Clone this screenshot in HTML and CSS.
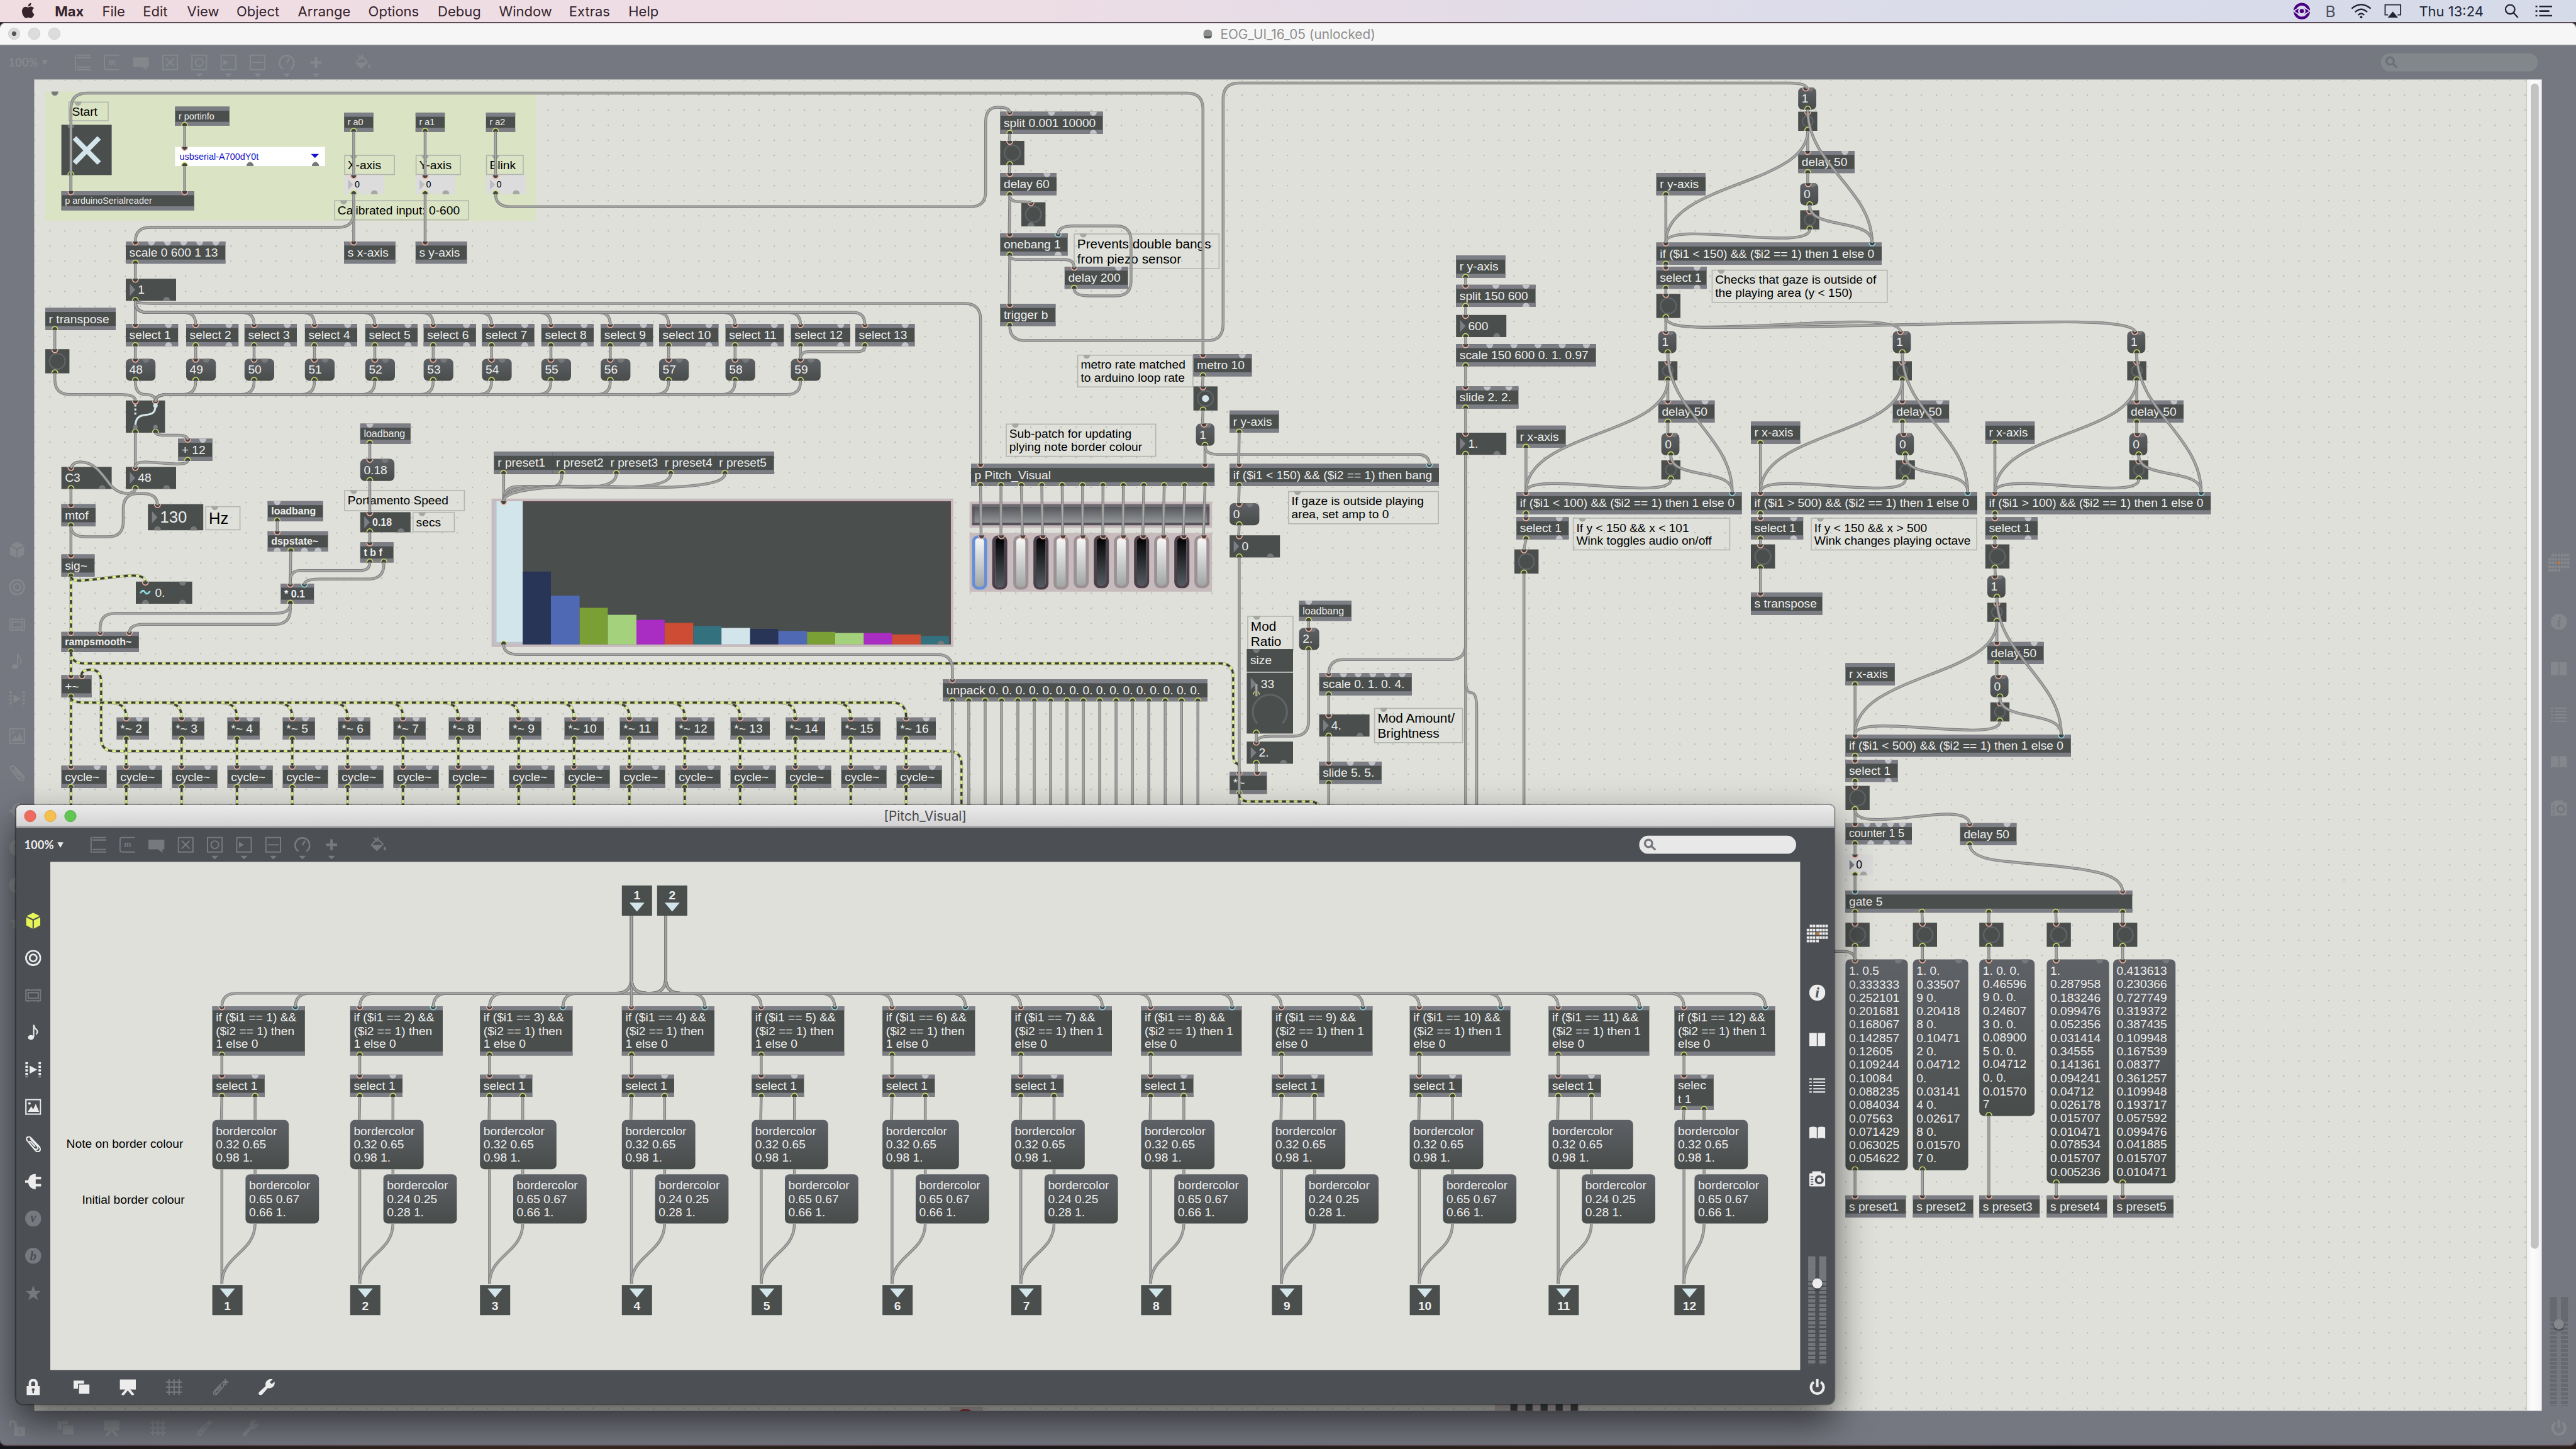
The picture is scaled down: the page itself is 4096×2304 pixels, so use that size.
FILE: index.html
```html
<!DOCTYPE html>
<html lang="en">
<head>
<meta charset="utf-8">
<title>EOG_UI_16_05</title>
<link rel="stylesheet" href="styles.css">
</head>
<body>
<svg class="defs" width="0" height="0">
  <defs>
    <symbol id="i-object" viewBox="0 0 32 32"><path class="ln" d="M2 0V32M5 1.5H32M5 6.5H32M5 25.5H32M5 30.5H32"/></symbol>
    <symbol id="i-message" viewBox="0 0 32 32"><path class="ln" d="M31 1.5H6Q1.500 1.500 1.500 6V26Q1.500 30.500 6 30.500H31"/><text class="glyph" x="17" y="21" font-size="18">m</text></symbol>
    <symbol id="i-comment" viewBox="0 0 32 32"><path d="M0 6H32V25H28V32L19 25H0Z"/></symbol>
    <symbol id="i-toggle" viewBox="0 0 32 32"><path class="ln" d="M1.500 1.500H30.500V30.500H1.500ZM8 8L24 24M24 8L8 24"/></symbol>
    <symbol id="i-button" viewBox="0 0 32 32"><path class="ln" d="M1.500 1.500H30.500V30.500H1.500Z"/><circle class="ln" cx="16" cy="16" r="7.500"/></symbol>
    <symbol id="i-number" viewBox="0 0 32 32"><path class="ln" d="M1.500 1.500H30.500V30.500H1.500Z"/><path d="M6 10L16 16L6 22Z"/></symbol>
    <symbol id="i-slider" viewBox="0 0 32 32"><path class="ln" d="M1.500 1.500H30.500V30.500H1.500ZM5 16H27"/></symbol>
    <symbol id="i-dial" viewBox="0 0 32 32"><path class="ln thick" d="M8 29A14.500 14.500 0 1 1 24 29M16 17L21 8"/></symbol>
    <symbol id="i-plus" viewBox="0 0 32 32"><path class="ln fat" d="M16 5V27M5 16H27"/></symbol>
    <symbol id="i-paint" viewBox="0 0 32 32"><path d="M1 17L13 29L26 16Z"/><path class="ln" d="M2 17L14 4L26 16M7 2L15 10M16 1L11 8"/><path d="M29 19Q34 27 29 27T29 19"/></symbol>
    <symbol id="i-cube" viewBox="0 0 32 32"><path d="M16 0L29 6.500L16 13L3 6.500ZM2 9L14.700 15.300V32L2 25ZM30 9L17.300 15.300V32L30 25Z"/></symbol>
    <symbol id="i-target" viewBox="0 0 32 32"><circle class="ln thick" cx="16" cy="16" r="14.300"/><circle class="ln thick" cx="16" cy="16" r="7"/></symbol>
    <symbol id="i-rack" viewBox="0 0 32 32"><path class="ln" d="M1.500 6H30.500V27H1.500ZM6 11H26V22H6ZM6 3V6M26 3V6M6 27V30M26 27V30"/></symbol>
    <symbol id="i-note" viewBox="0 0 32 32"><path class="ln" d="M17 25V1Q18 7 23 11Q26 15 22 20"/><ellipse cx="11.500" cy="26" rx="6" ry="4.800"/></symbol>
    <symbol id="i-video" viewBox="0 0 32 32"><path class="ln dots" d="M3 1V31M29 1V31"/><path d="M9 8L24 16L9 24Z"/></symbol>
    <symbol id="i-image" viewBox="0 0 32 32"><path class="ln" d="M1.500 1.500H30.500V30.500H1.500Z"/><path d="M5 26L12 15L16 21L21 10L28 26Z"/><circle cx="8.500" cy="9" r="2.500"/></symbol>
    <symbol id="i-clip" viewBox="0 0 32 32"><path class="ln" d="M10 5L24 20Q27 24 24 26T17 24L4 9Q1 4 5 2T12 4L28 21Q32 27 28 30T20 28L8 14Q7 10 11 11L20 21"/></symbol>
    <symbol id="i-plug" viewBox="0 0 32 32"><path d="M0 14H6Q8 1 21 1V7H32V12H21V21H32V26H21V32Q8 31 6 19H0Z"/></symbol>
    <symbol id="i-v" viewBox="0 0 32 32"><circle cx="16" cy="16" r="16"/><text class="glyph cut" x="16" y="23" font-size="25">v</text></symbol>
    <symbol id="i-b" viewBox="0 0 32 32"><circle cx="16" cy="16" r="16"/><text class="glyph cut" x="16" y="25" font-size="26">b</text></symbol>
    <symbol id="i-star" viewBox="0 0 32 32"><path d="M16 1L20 12H31L22 19L25.500 30L16 23.500L6.500 30L10 19L1 12H12Z"/></symbol>
    <symbol id="i-lock" viewBox="0 0 32 32"><path class="ln fat" d="M9.500 16V9Q9.500 2 16 2T22.500 9V16"/><path d="M3 14H29V32H3Z"/><path class="cut" d="M16 18A3 3 0 0 1 17.500 23.500V28H14.500V23.500A3 3 0 0 1 16 18"/></symbol>
    <symbol id="i-unlock" viewBox="0 0 32 32"><path class="ln fat" d="M1 13V9Q1 3 7 3T13 9V16"/><path d="M10 14H32V32H10Z"/><path class="cut" d="M20 18H22V27H20Z"/></symbol>
    <symbol id="i-windows" viewBox="0 0 32 32"><path d="M0 3H21V9H9V19H0Z"/><path d="M11 11H32V29H11Z"/></symbol>
    <symbol id="i-easel" viewBox="0 0 32 32"><path d="M0 1H32V21H0Z"/><path class="ln fat" d="M15 20L5 32M17 20L27 32"/></symbol>
    <symbol id="i-grid" viewBox="0 0 32 32"><path class="ln" d="M6 0V32M16 0V32M26 0V32M0 6H32M0 16H32M0 26H32"/></symbol>
    <symbol id="i-clipadd" viewBox="0 0 32 32"><g transform="translate(25 8) scale(-.76 .76)"><path class="ln" d="M10 5L24 20Q27 24 24 26T17 24L4 9Q1 4 5 2T12 4L28 21Q32 27 28 30T20 28L8 14Q7 10 11 11L20 21"/></g><path class="ln thick" d="M26 0V12M20 6H32"/></symbol>
    <symbol id="i-wrench" viewBox="0 0 32 32"><path d="M1 26L14 14Q12 5 20 1Q24-1 28 1L22 6L26 10L32 5Q33 14 26 17Q22 19 18 18L7 31Q4 33 1 31T1 26Z"/></symbol>
    <symbol id="i-info" viewBox="0 0 32 32"><circle cx="16" cy="16" r="16"/><text class="glyph cut" x="16" y="26" font-size="30">i</text></symbol>
    <symbol id="i-ref" viewBox="0 0 32 32"><path d="M0 3H15V29H0ZM17 3H32V29H17Z"/></symbol>
    <symbol id="i-list" viewBox="0 0 32 32"><path class="ln" d="M0 2.500H5M8 2.500H32M0 9H5M8 9H32M0 15.500H5M8 15.500H32M0 22H5M8 22H32M0 28.500H5M8 28.500H32"/></symbol>
    <symbol id="i-book" viewBox="0 0 32 32"><path d="M0 6Q8 3 15 6V28Q8 25 0 28ZM17 6Q24 3 32 6V28Q24 25 17 28Z"/></symbol>
    <symbol id="i-camera" viewBox="0 0 32 32"><path d="M2 5H6V1H24V5H30Q32 5 32 8V29Q32 31 30 31H2Q0 31 0 29V8Q0 5 2 5Z"/><circle class="cut" cx="20" cy="18" r="9"/><circle cx="20" cy="18" r="4.500"/><path class="cut" d="M3 11H8V13H3ZM3 16H8V18H3ZM3 21H8V23H3ZM3 26H8V28H3Z"/></symbol>
    <symbol id="i-power" viewBox="0 0 32 32"><path class="ln fat" d="M9 6A12.500 12.500 0 1 0 23 6M16 0V16"/></symbol>
    <symbol id="i-search" viewBox="0 0 32 32"><circle class="ln fat" cx="13" cy="12" r="9"/><path class="ln fat" d="M20 19L30 28"/></symbol>
  </defs>
</svg>

<div class="desktop">
  <header class="menubar">
    <svg class="apple" viewBox="0 0 24 24"><path d="M12.152 6.896c-.948 0-2.415-1.078-3.960-1.040-2.040.027-3.910 1.183-4.961 3.014-2.117 3.675-.546 9.103 1.519 12.090 1.013 1.454 2.208 3.090 3.792 3.039 1.520-.065 2.090-.987 3.935-.987 1.831 0 2.350.987 3.960.948 1.637-.026 2.676-1.480 3.676-2.948 1.156-1.688 1.636-3.325 1.662-3.415-.039-.013-3.182-1.221-3.220-4.857-.026-3.040 2.480-4.494 2.597-4.559-1.429-2.090-3.623-2.324-4.390-2.376-2-.156-3.675 1.090-4.610 1.090zM15.530 3.830c.843-1.012 1.400-2.427 1.245-3.830-1.207.052-2.662.805-3.532 1.818-.780.896-1.454 2.338-1.273 3.714 1.338.104 2.715-.688 3.559-1.701"/></svg>
    <nav class="menus">
      <b>Max</b><span>File</span><span>Edit</span><span>View</span><span>Object</span><span>Arrange</span><span>Options</span><span>Debug</span><span>Window</span><span>Extras</span><span>Help</span>
    </nav>
    <div class="status">
      <svg class="eye" viewBox="0 0 32 32"><circle cx="16" cy="16" r="13" fill="none" stroke="#4b0082" stroke-width="5"/><path d="M1 16Q16 3 31 16Q16 29 1 16Z" fill="#4b0082" stroke="#d9dbe9" stroke-width="2"/><circle cx="16" cy="16" r="5.500" fill="#4b0082" stroke="#d9dbe9" stroke-width="3"/></svg>
      <span class="bee">B</span>
      <svg class="wifi" viewBox="0 0 40 30"><path d="M1 10Q20-6 39 10M8 17Q20 6 32 17M14 23Q20 17 26 23" fill="none" stroke="#222536" stroke-width="3"/><circle cx="20" cy="27" r="2.500" fill="#222536"/></svg>
      <svg class="air" viewBox="0 0 36 30"><path d="M8 23H1.500V1.500H34.500V23H28" fill="none" stroke="#222536" stroke-width="2.500"/><path d="M7 29L18 16L29 29Z" fill="#222536"/></svg>
      <span class="clock">Thu 13:24</span>
      <svg class="find" viewBox="0 0 28 30"><circle cx="11" cy="11" r="9.500" fill="none" stroke="#222536" stroke-width="3"/><path d="M18 18L27 28" stroke="#222536" stroke-width="3"/></svg>
      <svg class="menu" viewBox="0 0 36 24"><path d="M0 2H4M0 12H4M0 22H4M8 2H36M8 12H30M8 22H36" stroke="#222536" stroke-width="3.500"/></svg>
    </div>
  </header>

  <section class="window main">
    <div class="titlebar"><i class="light doc"></i><i class="light"></i><i class="light"></i><h1><i class="docicon"></i>EOG_UI_16_05 (unlocked)</h1></div>
    <div class="toolbar" data-tools></div>
    <div class="middle">
      <aside class="side left" data-left></aside>
      <div class="canvas dotted" id="patch"></div>
      <div class="scroll"><div class="thumb"></div></div>
      <aside class="side right" data-right></aside>
    </div>
    <footer class="bottombar" data-bottom="unlock"></footer>
  </section>

  <section class="window sub">
    <div class="titlebar"><i class="light red"></i><i class="light amber"></i><i class="light green"></i><h1>[Pitch_Visual]</h1></div>
    <div class="toolbar" data-tools></div>
    <div class="middle">
      <aside class="side left" data-left></aside>
      <div class="canvas" id="pitch"></div>
      <aside class="side right" data-right></aside>
    </div>
    <footer class="bottombar" data-bottom="lock"></footer>
  </section>
</div>
<script src="app.js"></script>
</body>
</html>
```
FILE: styles.css
```css
* { box-sizing: border-box; }
html, body { margin: 0; padding: 0; width: 4096px; height: 2304px; overflow: hidden; background: #2a211b; }
body { font-family: "Liberation Sans", Arial, sans-serif; }
.defs { position: absolute; }
svg { display: block; fill: currentColor; flex: none; }
.ln { fill: none; stroke: currentColor; stroke-width: 2.6; }
.thick { stroke-width: 3.4; }
.fat { stroke-width: 5; }
.dots { stroke-width: 5; stroke-dasharray: 4.200 3; }
.glyph { font-family: "Liberation Serif", serif; font-style: italic; font-weight: bold; text-anchor: middle; }
.cut { fill: var(--chrome); }

.desktop { width: 5120px; height: 2880px; transform: scale(0.8); transform-origin: 0 0; overflow: hidden;
  display: flex; flex-direction: column; position: relative;
  background: linear-gradient(90deg, #17171b, #3a2b20 22%, #1b1a1a 40%, #33271c 66%, #151515 80%, #2a211b); }

.menubar { height: 44px; flex: none; display: flex; align-items: center; padding-left: 41px; color: #35242c;
  font: 27.500px Inter, sans-serif; background: linear-gradient(90deg, #efdde2, #eddde5 40%, #dcdcea 70%, #d5dbe9); }
.apple { width: 30px; height: 32px; margin-right: 38px; margin-bottom: 2px; }
.menus { display: grid; grid-template-columns: 94px 81px 88px 98px 122px 140px 138px 122px 139px 118px 90px; flex: 1; }
.status { display: flex; align-items: center; color: #222536; padding-right: 46px; }
.eye { width: 34px; height: 34px; }
.bee { font-size: 31px; color: #4b4e5c; margin-left: 30px; width: 25px; }
.wifi { width: 40px; height: 30px; margin-left: 26px; }
.air { width: 36px; height: 28px; margin-left: 25px; }
.clock { margin-left: 34px; width: 130px; white-space: nowrap; }
.find { width: 28px; height: 29px; margin-left: 40px; }
.menu { width: 36px; height: 22px; margin-left: 32px; }

.window { display: flex; flex-direction: column; }
.main { --chrome: #757881; --icon: #84888c; --dim: #84888c; --accent: #84888c; --label: #84888c; --cell: #84888c;
  height: 2826px; margin-top: 2px; flex: none; box-shadow: 0 0 0 2px #5a4651; border-radius: 10px 10px 12px 12px; overflow: hidden; background: var(--chrome); }
.sub { --chrome: #4c4f54; --icon: #ececec; --dim: #76797d; --accent: #e5f457; --label: #ececec; --cell: #ececec;
  position: absolute; left: 32px; top: 1600px; width: 3614px; height: 1191px; background: var(--chrome);
  border-radius: 10px 10px 14px 14px; box-shadow: 0 0 2px 1px rgba(0,0,0,.45), 0 34px 76px rgba(0,0,0,.62); }
.titlebar { height: 44px; flex: none; display: flex; align-items: center; gap: 16px; padding-left: 16px; position: relative; background: #f6f6f6; border-bottom: 2px solid #cfcfcf; }
.sub .titlebar { background: linear-gradient(#ebebeb, #d2d2d2); border-bottom-color: #b1b1b1; border-radius: 10px 10px 0 0; height: 45px; }
.light { width: 24px; height: 24px; border-radius: 50%; background: #dcdcdc; border: 1px solid #c8c8c8; }
.doc { background: radial-gradient(circle, #555 4px, #dcdcdc 5px); }
.red { background: #ed6a5f; border-color: #d65a50; } .amber { background: #f5bf4f; border-color: #d9a33b; } .green { background: #61c554; border-color: #4fa843; }
h1 { margin: 0; flex: 1; text-align: center; font: 26px Inter, sans-serif; color: #8e8e8e; padding-right: 136px; display: flex; justify-content: center; align-items: center; gap: 16px; }
.main h1 { padding: 2px 130px 0 0; }
.sub h1 { color: #474747; }
.docicon { width: 17px; height: 18px; border-radius: 7px; background: #8a8f8c; border-bottom: 5px solid #555; }

.toolbar { height: 68px; flex: none; display: flex; align-items: center; color: var(--dim); padding: 0 76px 0 16px; }
.main .toolbar { padding-left: 17px; }
.percent { font: bold 23px Lato, sans-serif; color: var(--label); width: 66px; }
.tri { width: 0; height: 0; border: 6px solid transparent; border-top: 11px solid var(--label); border-bottom: 0; margin-right: 53px; }
.tool { position: relative; width: 58px; height: 32px; }
.tool svg, .side svg, .bottombar svg { width: 32px; height: 32px; }
.tool.more::after { content: ""; position: absolute; left: 9px; top: 38px; border: 7px solid transparent; border-top: 7px solid var(--dim); border-bottom: 0; }
.paint { margin-left: 35px; }
.search { margin-left: auto; width: 312px; height: 36px; border-radius: 18px; background: #e8e8e8; color: #74777c; display: flex; align-items: center; padding-left: 8px; }
.main .search { background: #82878b; color: #6d7177; }
.search svg { width: 26px; height: 27px; }
.middle { flex: 1; display: flex; min-height: 0; }
.side { width: 68px; flex: none; display: flex; flex-direction: column; align-items: center; color: var(--icon); }
.left { justify-content: center; gap: 42px; padding-bottom: 36px; }
.left .dim { color: var(--dim); } .left .accent { color: var(--accent); }
.right { padding-top: 125px; }
.main .right { padding-top: 943px; }
.cells { display: grid; grid-template-columns: repeat(7, 5px); gap: 2.500px 1.250px; grid-auto-rows: 5px; margin-bottom: 84px; }
.cells i { background: var(--cell); } .cells .off { background: none; } .cells .hot { background: #d07a28; }
.right > svg { margin-bottom: 60.500px; }
.gain { margin-top: auto; display: grid; grid-template-columns: 14px 14px; gap: 8px; height: 216px; position: relative; margin-bottom: 10px; }
.gain i { background: repeating-linear-gradient(#74777c 0 6px, transparent 6px 8.600px); }
.gain i::before { content: ""; display: block; height: 46px; background: #74777c; }
.main .gain i { background: repeating-linear-gradient(#666970 0 6px, transparent 6px 8.600px); }
.main .gain i::before { background: #666970; }
.gain b { position: absolute; left: 8px; top: 44px; width: 20px; height: 20px; border-radius: 50%; background: var(--icon); box-shadow: 0 3px 4px rgba(0,0,0,.4); }
.bottombar { height: 68px; flex: none; display: flex; align-items: center; gap: 60px; color: var(--icon); padding: 0 18px; }
.bottombar .dim { color: var(--dim); }
.bottombar svg:first-child { margin-right: 4px; }
.bottombar svg:last-child { margin-left: auto; }

.canvas { flex: 1; position: relative; overflow: hidden; background-color: #dfe0da; }
.dotted { background-image: radial-gradient(circle, #b4b6af 1.200px, transparent 1.700px); background-size: 30px 30px; background-position: -14px -14px; }
.scroll { width: 30px; background: linear-gradient(90deg, #f0f0f0, #fcfcfc 40%, #f2f2f2); padding: 8px 6px 0 8px; }
.thumb { height: 2316px; border-radius: 8px; background: #c3c3c3; }
.cords { position: absolute; left: 0; top: 0; }

.node { position: absolute; display: flex; align-items: center; white-space: pre; font-size: 24px; line-height: 26.600px; color: #ededed; padding-left: 7px; }
.obj { background: #4a4e4c; border: solid #7c7d85; border-width: 8px 0; }
.num, .bang, .flat { background: #4a4e4c; }
.msg { background: linear-gradient(#5e6166, #484c4a); border-radius: 9px; }
.num { padding-left: 24px; }
.num::before { content: ""; position: absolute; left: 8px; top: 50%; margin-top: -12px; border: 12px solid transparent; border-left: 11px solid #7c7d85; border-right: 0; }
.lightnum { background: #dcdcdc; color: #000; padding-left: 21px; }
.lightnum::before { border-width: 10px; border-left: 10px solid #bcbcbc; border-right: 0; margin-top: -10px; }
.grey { background: #dadadb; }
.grey::before { border-left-color: #7c7d85; }
.white { background: #fff; color: #1210c8; padding-left: 9px; }
.white::after { content: ""; position: absolute; right: 12px; top: 14px; border: 8px solid transparent; border-top: 8px solid #1210c8; border-bottom: 0; }
.note { border: 2px solid #b3b5b0; color: #000; padding-left: 5px; line-height: 26px; }
.plain { color: #000; padding: 0; }
.light-text { color: #ededed; padding: 0; }
.s18 { font-size: 18px; } .s20 { font-size: 20px; } .s22 { font-size: 22px; } .s26 { font-size: 26px; line-height: 30px; } .s32 { font-size: 32px; }
.bold { font-weight: bold; }
.bang::before { content: ""; position: absolute; inset: 7px; border: 3px solid #606366; border-radius: 50%; }
.lit::after { content: ""; position: absolute; left: 17px; top: 17px; width: 14px; height: 14px; border-radius: 50%; background: #d2e5ea; }
.panel { background: #dae3c3; }
.sig { padding-left: 38px; }
.io { background: #4a4e4c; padding: 0; flex-direction: column; justify-content: center; font-weight: bold; line-height: 24px; gap: 5px; }
.io::before { content: ""; border: 15px solid transparent; border-top: 18px solid #d2e5ea; border-bottom: 0; }
.inlet { flex-direction: column-reverse; gap: 2px; }
.slider { background: #4a4e4c; padding: 0; align-items: flex-end; outline: 5px solid #c7babd; border: solid #584a50; border-width: 3px 4px 0 0; }
.slider i { flex: 1; }
.slider i:first-child { box-shadow: inset 5px -5px #bfc2cc; }
.haze { background: #c8bbbe; }
.strip { background: linear-gradient(#55565c, #929696); border: 5px solid rgba(88, 72, 84, .55); }
.key { border: 6px solid #9b9195; border-radius: 12px; background: linear-gradient(#f6f7f6, #a2a7a5); }
.key.black { border-color: #4b3f49; background: linear-gradient(#020303, #535a5f); }
.key.on { border-color: #648fd8; }
```
FILE: app.js
```js
// ---------- window furniture ----------
const icon = (n, c = '') => `<svg class="${c}"><use href="#i-${n}"/></svg>`;

document.querySelectorAll('[data-tools]').forEach(el => {
  const tools = ['object', 'message', 'comment', 'toggle', 'button', 'number', 'slider', 'dial', 'plus'];
  el.innerHTML = '<span class="percent">100%</span><i class="tri"></i>' +
    tools.map((t, i) => `<div class="tool ${i > 3 ? 'more' : ''}">${icon(t)}</div>`).join('') +
    `<div class="tool paint">${icon('paint')}</div><div class="search">${icon('search')}</div>`;
});
document.querySelectorAll('[data-left]').forEach(el => {
  el.innerHTML = [['cube', 'accent'], ['target'], ['rack', 'dim'], ['note'], ['video'], ['image'], ['clip'], ['plug'],
    ['v', 'dim'], ['b', 'dim'], ['star', 'dim']].map(a => icon(...a)).join('');
});
document.querySelectorAll('[data-right]').forEach(el => {
  const rows = ['.######', '#######', '###o###', '#######', '####...'];
  el.innerHTML = '<div class="cells">' + rows.join('').split('').map(c =>
    `<i class="${c === '.' ? 'off' : c === 'o' ? 'hot' : ''}"></i>`).join('') + '</div>' +
    ['info', 'ref', 'list', 'book', 'camera'].map(n => icon(n)).join('') + '<div class="gain"><i></i><i></i><b></b></div>';
});
document.querySelectorAll('[data-bottom]').forEach(el => {
  el.innerHTML = icon(el.dataset.bottom) + icon('windows') + icon('easel') + icon('grid', 'dim') +
    icon('clipadd', 'dim') + icon('wrench') + icon('power');
});

// ---------- patch canvas ----------
class Patch {
  constructor(id, ox, oy, w, h) {
    this.el = document.getElementById(id);
    Object.assign(this, { ox, oy, w, h, html: '', ports: '', lines: '' });
  }
  // a node: class names, box, label, then inlets and outlets.
  // ports: p pink, c cyan, y yellow, u unused, g faint; a string spreads evenly, an array gives [offset, kind]
  n(cls, x, y, w, h, text = '', ins = '', outs = '') {
    const t = String(text).replace(/&/g, '&amp;').replace(/</g, '&lt;');
    this.raw(cls, x, y, w, h, t);
    this.row(ins, x, y, w, 0, cls);
    this.row(outs, x, y + h, w, 1, cls);
  }
  raw(cls, x, y, w, h, inner = '') {
    this.html += `<div class="node ${cls}" style="left:${x - this.ox}px;top:${y - this.oy}px;width:${w}px;height:${h}px">${inner}</div>`;
  }
  row(spec, x, y, w, up, cls) {
    const list = typeof spec === 'string'
      ? [...spec].map((k, i, a) => [a.length > 1 ? 19 + i * (w - 38) / (a.length - 1) : 19, k]) : spec;
    list.slice().reverse().forEach(([dx, k]) => {
      const r = k === 'u' || k === 'g' ? 7 : 6;
      const fill = { u: /obj/.test(cls) ? '#c3c4c8' : '#76787a', g: '#a5a8a0' }[k] || '#3f4342';
      const ring = { p: '#efae9c', c: '#93d6de', y: '#cbd866' }[k] || 'none';
      this.ports += `<path d="M${x + dx - r} ${y}a${r} ${r + 1} 0 0 ${up} ${2 * r} 0" fill="${fill}" stroke="${ring}" stroke-width="2"/>`;
    });
  }
  d(path, sig) {
    this.lines += sig
      ? `<path d="${path}" stroke="#a5a89a" stroke-width="6"/><path d="${path}" stroke="#def289" stroke-width="4"/><path d="${path}" stroke="#393c35" stroke-width="4" stroke-dasharray="8.500 7"/>`
      : `<path d="${path}" stroke="#7d7d7d" stroke-width="5.600"/><path d="${path}" stroke="#a7a8a5" stroke-width="3"/>`;
  }
  l(x1, y1, x2, y2, sig) { this.d(`M${x1} ${y1}L${x2} ${y2}`, sig); }
  // rounded polyline
  p(pts, sig, r = 30) {
    let s = `M${pts[0]}`;
    for (let i = 1; i < pts.length - 1; i++) {
      const cut = (q, end) => {
        const L = Math.hypot(q[0] - pts[i][0], q[1] - pts[i][1]);
        const k = Math.min(r, end ? L : L / 2) / L;
        return [pts[i][0] + (q[0] - pts[i][0]) * k, pts[i][1] + (q[1] - pts[i][1]) * k];
      };
      s += `L${cut(pts[i - 1], i === 1)}Q${pts[i]} ${cut(pts[i + 1], i === pts.length - 2)}`;
    }
    this.d(s + `L${pts[pts.length - 1]}`, sig);
  }
  c(x1, y1, x2, y2, a, b = a) { this.d(`M${x1} ${y1}C${x1} ${y1 + a} ${x2} ${y2 - b} ${x2} ${y2}`); }
  extra(s) { this.ports += s; }
  done() {
    this.el.innerHTML = this.html +
      `<svg class="cords" width="${this.w}" height="${this.h}" viewBox="${this.ox} ${this.oy} ${this.w} ${this.h}">${this.ports}<g fill="none">${this.lines}</g></svg>`;
  }
}

const m = new Patch('patch', 68, 158, 4954, 2646);

// serial input
m.n('panel', 90, 182, 975, 257); m.row([[19, 'u']], 90, 182, 0, 0, '');
m.n('note', 136, 202, 80, 39, 'Start', 'g');
m.n('flat', 122, 248, 100, 100, '', 'u', 'y');
m.extra('<path d="M148 274L197 324M197 274L148 324" stroke="#d2e5ea" stroke-width="10"/>');
m.n('obj s18', 122, 380, 264, 38, 'p arduinoSerialreader', [[19, 'p'], [245, 'p']]);
m.n('obj s18', 348, 212, 108, 38, 'r portinfo', '', 'y');
m.n('white s18', 348, 292, 298, 38, 'usbserial-A700dY0t', 'p', 'yuu');
[[684, 'r a0', 'X-axis', 101], [826, 'r a1', 'Y-axis', 90], [966, 'r a2', 'Blink', 75]].forEach(([x, a, b, w]) => {
  m.n('obj s18', x, 224, 58, 38, a, '', 'y');
  m.n('note', x, 308, w, 40, b, 'g');
  m.n('num lightnum s18', x, 348, 79, 38, '0', 'p', 'yg');
  m.l(x + 19, 262, x + 19, 348);
});
m.n('note', 664, 398, 268, 40, 'Calibrated input: 0-600', 'g');
m.n('obj', 684, 480, 102, 44, 's x-axis', 'p');
m.n('obj', 826, 480, 102, 44, 's y-axis', 'p');
m.n('obj', 250, 480, 198, 44, 'scale 0 600 1 13', 'puuuuu', 'y');
m.n('num', 250, 554, 100, 44, '1', 'p', 'yu');
m.n('obj', 90, 612, 140, 44, 'r transpose', '', 'y');
m.n('bang', 90, 694, 48, 48, '', 'p', 'y');
m.p([[141, 380], [141, 185], [2391, 185], [2391, 704]], 0, 32);
m.l(141, 348, 141, 380); m.l(367, 250, 367, 292); m.l(367, 330, 367, 380);
m.l(703, 386, 703, 480); m.p([[703, 400], [703, 452], [269, 452], [269, 480]]);
m.l(845, 386, 845, 480);
m.p([[985, 386], [985, 411], [1959, 411], [1959, 213], [2007, 213], [2007, 224]]);
m.l(269, 524, 269, 554); m.l(269, 598, 269, 644);
m.p([[269, 598], [269, 603], [1949, 603], [1949, 922]], 0, 32);
m.l(109, 656, 109, 694); m.p([[109, 742], [109, 784], [269, 784], [269, 796]]);

// note selectors
[250, 370, 486, 606, 726, 842, 958, 1076, 1194, 1310, 1442, 1572, 1700].forEach((x, i) => {
  const X = x + 19;
  m.n('obj', x, 644, i < 9 ? 104 : i === 10 ? 116 : 118, 44, 'select ' + (i + 1), 'pu', 'yu');
  if (i) m.p([[269, 600], [269, 621], [X, 621], [X, 646]], 0, 24);
  if (i < 12) {
    m.n('msg', x, 713, 59, 44, 48 + i, 'pu', 'y');
    m.l(X, 688, X, 713);
    m.p([[X, 757], [X, 784], [309, 784], [309, 798]], 0, 26);
  }
});
m.p([[1719, 688], [1719, 699], [1591, 699], [1591, 713]], 0, 16);

// octave switch, pitch
m.n('flat', 250, 796, 78, 64, '', 'pp', 'yy');
m.extra('<path d="M269 804V824" stroke="#d2e5ea" stroke-width="4" stroke-dasharray="4 4"/><path d="M309 806C309 840 269 808 269 848" fill="none" stroke="#d2e5ea" stroke-width="4"/><circle cx="309" cy="806" r="4.500" fill="#d2e5ea"/><circle cx="269" cy="849" r="4.500" fill="#7c7d85"/><circle cx="309" cy="849" r="4.500" fill="#7c7d85"/>');
m.n('obj', 354, 872, 68, 44, '+ 12', 'pu', 'y');
m.n('num', 250, 928, 100, 44, '48', 'p', 'yu');
m.n('flat', 122, 928, 100, 44, 'C3', 'p', 'yu');
m.n('obj', 122, 1002, 68, 44, 'mtof', 'p', 'y');
m.n('num s32', 294, 1002, 110, 52, '130', 'p', 'uu');
m.n('note s32', 408, 1006, 70, 48, 'Hz', 'g');
m.n('obj', 122, 1102, 66, 44, 'sig~', 'p', 'y');
m.n('flat sig', 270, 1156, 112, 44, '0.', 'pu', 'uu');
m.extra('<path d="M279 1179Q284 1170 288 1177T298 1175" fill="none" stroke="#8fd9e2" stroke-width="3.500"/>');
m.l(269, 860, 269, 928); m.p([[309, 860], [309, 865], [373, 865], [373, 874]], 0, 20);
m.d('M373 916Q373 923 345 922C310 920 285 916 275 920Q269 922 269 930');
m.d('M269 972C266 984 236 986 218 962S186 918 160 918Q145 918 141 930');
m.l(141, 972, 141, 1002); m.l(141, 1046, 141, 1102);
m.p([[141, 1046], [141, 1067], [245, 1067], [245, 981], [313, 981], [313, 1004]]);
m.l(141, 1146, 141, 1256, 1);
m.d('M141 1146Q142 1154 158 1154C190 1153 235 1144 265 1144Q288 1144 289 1156', 1);

// portamento
m.n('obj bold s20', 532, 996, 110, 40, 'loadbang', 'u', 'y');
m.n('obj bold s20', 532, 1056, 120, 40, 'dspstate~', 'p', [[19, 'u'], [46, 'y'], [73, 'u'], [100, 'u']]);
m.n('obj s20', 716, 842, 100, 40, 'loadbang', 'u', 'y');
m.n('msg', 716, 912, 68, 44, '0.18', 'pu', 'y');
m.n('note', 684, 974, 240, 42, 'Portamento Speed', 'g');
m.n('num bold s20', 716, 1018, 100, 40, '0.18', 'p', 'yu');
m.n('note', 820, 1018, 84, 40, 'secs', 'g');
m.n('obj bold s20', 716, 1078, 66, 40, 't b f', 'p', 'yy');
m.n('obj bold s20', 558, 1160, 66, 40, '* 0.1', 'pc', 'y');
m.n('obj bold s20', 122, 1256, 154, 40, 'rampsmooth~', 'ppp', 'y');
m.l(735, 882, 735, 912); m.l(735, 956, 735, 1018); m.l(735, 1058, 735, 1078);
m.l(551, 1036, 551, 1056); m.l(578, 1096, 577, 1160);
m.p([[735, 1118], [735, 1134], [577, 1134], [577, 1162]], 0, 20);
m.p([[763, 1118], [763, 1151], [605, 1151], [605, 1162]]);
m.p([[577, 1200], [577, 1219], [199, 1219], [199, 1258]]);
m.p([[577, 1200], [577, 1241], [257, 1241], [257, 1258]]);

// oscillator bank
m.n('obj', 122, 1342, 60, 44, '+~', 'pp', 'y');
m.l(141, 1296, 141, 1342, 1);
m.p([[141, 1296], [141, 1318.5], [2451, 1318.5], [2451, 1517], [2463, 1517], [2463, 1534]], 1, 26);
m.p([[162, 1342], [162, 1331], [201, 1331], [201, 1493], [1911, 1493], [1911, 1604]], 1, 26);
m.l(141, 1386, 141, 1522, 1);
m.n('obj', 122, 1522, 90, 44, 'cycle~', 'pu', 'y'); m.l(141, 1566, 141, 1604, 1);
for (let i = 2; i <= 16; i++) {
  const x = i < 9 ? 232 + (i - 2) * 110 : 1012 + (i - 9) * 110, X = x + 19;
  m.n('obj', x, 1426, i < 10 ? 64 : i === 11 ? 76 : 78, 44, '*~ ' + i, 'pu', 'y');
  m.n('obj', x, 1522, 90, 44, 'cycle~', 'pu', 'y');
  if (i < 16) m.d(`M${X - 30} 1397Q${X} 1397 ${X} 1426`, 1);
  m.l(X, 1470, X, 1522, 1); m.l(X, 1566, X, 1604, 1);
}
m.p([[141, 1386], [141, 1396.500], [1801, 1396.500], [1801, 1426]], 1, 28);

// harmonics
m.n('obj', 982, 898, 556, 44);
[982, 1098, 1206, 1314, 1422].forEach((x, i) => {
  m.n('obj', x, 898, 116, 44, 'r preset' + (i + 1), '', 'y');
  const X = x + 19, mid = (X + 1001) / 2;
  if (!i) m.l(1001, 942, 1001, 996);
  else m.d(`M${X} 942C${X} 976 ${mid + 30} 968 ${mid} 967S1001 962 1001 996`);
});
{
  const heights = [285, 145, 97, 73, 59.5, 49, 43, 37, 33, 31, 27, 25, 23, 23, 20, 17.5];
  const colors = ['#d2e5ea', '#283557', '#4f69b4', '#7a9f35', '#a4d17c', '#a92cc3', '#cd4c33', '#33717f'];
  m.raw('slider', 982, 996, 908, 285, heights.map((h, i) => `<i style="height:${h}px;background:${colors[i % 8]}"></i>`).join(''));
  m.row([[19, 'p']], 982, 996, 0, 0, ''); m.row([[19, 'y'], [888, 'u']], 982, 1281, 0, 1, '');
}
m.p([[1001, 1281], [1001, 1301], [1893, 1301], [1893, 1352]], 0, 30);
m.n('obj', 1874, 1350, 526, 44, 'unpack' + ' 0.'.repeat(16), 'p', 'y'.repeat(16));
for (let i = 0; i < 16; i++) { const X = 1893 + i * 32.53; m.l(X, 1394, X, 1604); }

// blink debounce
m.n('obj', 1988, 222, 204, 44, 'split 0.001 10000', 'puu', 'yu');
m.n('bang', 1988, 280, 48, 48, '', 'p', 'y');
m.n('obj', 1988, 344, 112, 44, 'delay 60', 'pu', 'y');
m.n('bang', 2030, 402, 48, 48, '', 'p', 'u');
m.n('note s26', 2134, 464, 290, 71, 'Prevents double bangs\nfrom piezo sensor', 'g');
m.n('obj', 1988, 464, 134, 44, 'onebang 1', 'pc', 'yu');
m.n('obj', 2116, 530, 126, 44, 'delay 200', 'pu', 'y');
m.n('obj', 1988, 604, 110, 44, 'trigger b', 'p', 'y');
m.n('note', 2141, 705, 231, 65, 'metro rate matched\nto arduino loop rate', 'g');
m.n('obj', 2372, 704, 116, 44, 'metro 10', 'pu', 'y');
m.n('bang lit', 2372, 768, 48, 48, '', 'p', 'y');
m.n('msg', 2377, 842, 37, 44, '1', [[16, 'p'], [24, 'u']], [[18, 'y']]);
m.n('obj', 2444, 816, 98, 44, 'r y-axis', '', 'y');
m.n('note', 1999, 842, 299, 66, 'Sub-patch for updating\nplying note border colour', 'g');
m.l(2007, 266, 2006, 280); m.l(2007, 328, 2006, 344); m.l(2007, 388, 2006, 464); m.l(2007, 508, 2006, 604);
m.p([[2007, 388], [2007, 401], [2049, 401], [2049, 404]], 0, 20);
m.p([[2007, 508], [2007, 516], [2135, 516], [2135, 532]], 0, 20);
m.p([[2135, 574], [2135, 588], [2248, 588], [2248, 449], [2103, 449], [2103, 466]]);
m.p([[2007, 648], [2007, 677], [2431, 677], [2431, 165], [3589, 165], [3592, 176]], 0, 32);
m.l(2391, 748, 2390, 768); m.l(2391, 816, 2390, 842); m.l(2395, 886, 2395, 922);
m.p([[2395, 886], [2395, 903], [2841, 903], [2841, 924]], 0, 24);
m.l(2463, 860, 2462, 922);

// playing note display
m.raw('haze', 1927, 997, 482, 52); m.raw('strip', 1932, 1002, 472, 42); m.raw('haze', 1927, 1059, 482, 117);
m.n('obj', 1930, 922, 484, 44, 'p Pitch_Visual', 'pp', 'y'.repeat(12));
[1947, 1986.500, 2029, 2069, 2109, 2148.500, 2189, 2229, 2268.500, 2309, 2349, 2389].forEach((x, i) => {
  m.raw('key ' + (i ? [1, 3, 6, 8, 10].includes(i) ? 'black' : '' : 'on'), x - 15, 1064, 30, i < 5 ? 108 : 105);
  m.row([[4, 'p']], x, 1064, 0, 0, '');
  m.l(1949 + i * 40.550, 966, x + 3, 1064);
});

// amplitude gate
m.n('obj', 2444, 922, 416, 44, 'if ($i1 < 150) && ($i2 == 1) then bang', 'pc', 'y');
m.n('note', 2560, 976, 300, 66, 'If gaze is outside playing\narea, set amp to 0', 'g');
m.n('msg', 2444, 1000, 59, 44, '0', 'pu', 'y');
m.n('num', 2444, 1064, 100, 44, '0', 'p', 'yu');
m.n('obj s20', 2582, 1194, 104, 40, 'loadbang', 'u', 'y');
m.n('msg', 2582, 1248, 40, 44, '2.', [[19, 'p'], [27, 'u']], 'y');
m.n('note s26', 2479, 1224, 92, 71, 'Mod\nRatio', 'g');
m.n('flat', 2478, 1290, 92, 45, 'size', 'u');
m.n('flat', 2478, 1337, 92, 121, '', '', 'y');
m.n('light-text', 2506, 1345, 40, 28, '33');
m.extra('<path d="M2486 1347L2497 1359L2486 1371Z" fill="#7c7d85"/><path d="M2499 1438A34 34 0 1 1 2549 1438" fill="none" stroke="#606366" stroke-width="4"/>');
m.row([[0, 'y']], 2497, 1381, 0, 1, ''); m.l(2497, 1360, 2497, 1384);
m.n('obj', 2444, 1534, 74, 44, '*~', 'pp', 'y');
m.n('num', 2478, 1474, 92, 44, '2.', 'p', 'yu');
m.n('obj', 2622, 1338, 184, 44, 'scale 0. 1. 0. 4.', 'puuuuu', 'y');
m.n('num', 2622, 1420, 100, 44, '4.', 'p', 'yu');
m.n('note s26', 2731, 1407, 177, 70, 'Mod Amount/\nBrightness', 'g');
m.n('obj', 2622, 1514, 124, 44, 'slide 5. 5.', 'puu', 'y');
m.l(2463, 966, 2462, 1000); m.l(2463, 1044, 2462, 1064); m.l(2463, 1108, 2463, 1604);
m.l(2601, 1234, 2601, 1248); m.p([[2601, 1292], [2601, 1463], [2497, 1463], [2497, 1476]]);
m.l(2497, 1458, 2497, 1474); m.l(2497, 1518, 2497, 1534);
m.p([[2913, 905], [2913, 1311], [2641, 1311], [2641, 1340]]);
m.l(2641, 1382, 2641, 1420); m.l(2641, 1464, 2641, 1514); m.l(2641, 1558, 2641, 1604);
m.p([[2463, 1578], [2463, 1593], [2622, 1593], [2622, 1608]], 1, 20);

// brightness
m.n('obj', 2894, 508, 98, 44, 'r y-axis', '', 'y');
m.n('obj', 2894, 566, 158, 44, 'split 150 600', 'puu', 'yu');
m.n('num', 2894, 626, 100, 44, '600', 'p', 'yu');
m.n('obj', 2894, 684, 278, 44, 'scale 150 600 0. 1. 0.97', 'puuuuu', 'y');
m.n('obj', 2894, 768, 124, 44, 'slide 2. 2.', 'puu', 'y');
m.n('num', 2894, 860, 100, 44, '1.', 'p', 'yu');
[[552, 566], [610, 626], [670, 684], [728, 768], [812, 860], [904, 1604]].forEach(([a, b]) => m.l(2913, a, 2913, b));
m.p([[2913, 1340], [2913, 1377], [2935, 1377], [2935, 1604]]);

// wink detectors: message column, gate row, receive box
function wink(M, my, by, dy, Z, zy, L, R, Y, gy, name, cond) {
  const X = M + 19, W = Z + 19;
  m.n('obj', L - 19, gy, 98, 44, name, '', 'y');
  m.n('msg', M, my, 36, 44, '1', [[15, 'p'], [24, 'u']], 'y');
  m.n('bang', M, by, 38, 38, '', 'p', 'y');
  m.n('obj', M, dy, 112, 44, 'delay 50', 'pu', 'y');
  m.n('msg', Z, zy, 36, 44, '0', [[16, 'p'], [25, 'u']], 'y');
  m.n('bang', Z, zy + 54, 38, 38, '', 'p', 'y');
  m.n('obj', L - 19, Y, R - L + 38, 44, `if ($i1 ${cond}) && ($i2 == 1) then 1 else 0`, 'pc', 'y');
  m.l(L, gy + 44, L, Y);
  m.l(X, my + 44, X, by); m.l(X, by + 38, X, dy); m.l(X, dy + 44, X, zy); m.l(W, zy + 44, W, zy + 54);
  m.c(X, my + 44, R, Y, (Y - my - 44) * 0.42, (Y - my - 44) * 0.4);
  m.c(X, by + 38, L, Y, (Y - by) * 0.42, (Y - by) * 0.46);
  m.c(W, zy + 44, R, Y, 50, 50);
  m.c(W, zy + 92, L, Y, 46, 46);
}
wink(3574, 174, 222, 300, 3578, 364, 3311, 3721, 482, 344, 'r y-axis', '< 150');
wink(3296, 658, 718, 796, 3302, 861, 3033, 3443, 978, 846, 'r x-axis', '< 100');
wink(3762, 658, 718, 796, 3768, 861, 3499, 3911, 978, 838, 'r x-axis', '> 500');
wink(4228, 658, 718, 796, 4232, 861, 3965, 4375, 978, 838, 'r x-axis', '> 100');
wink(3950, 1144, 1198, 1276, 3956, 1342, 3687, 4097, 1460, 1318, 'r x-axis', '< 500');
[[3292, 530, 100, 3292, 584, 526], [3014, 1028, 104, 3010, 1092, 1022], [3480, 1028, 104, 3480, 1082, 1022],
  [3946, 1028, 104, 3946, 1082, 1022], [3668, 1510, 104, 3668, 1562, 1504]].forEach(([x, y, w, bx, by, oy]) => {
  m.n('obj', x, y, w, 44, 'select 1', 'pu', 'yu');
  m.n('bang', bx, by, 48, 48, '', 'p', 'y');
  m.l(x + 19, oy, x + 19, y); m.l(x + 19, y + 44, bx + 19, by);
});
m.n('note', 3402, 536, 350, 66, 'Checks that gaze is outside of\nthe playing area (y < 150)', 'g');
m.n('note', 3126, 1029, 313, 65, 'If y < 150 && x < 101\nWink toggles audio on/off', 'g');
m.n('note', 3599, 1029, 331, 65, 'If y < 150 && x > 500\nWink changes playing octave', 'g');
m.n('obj', 3480, 1178, 142, 44, 's transpose', 'p');
m.l(3311, 632, 3311, 660);
m.d('M3311 632Q3313 650 3380 650C3500 650 3600 640 3680 640Q3775 638 3778 660');
m.d('M3311 632Q3313 651 3400 651C3700 651 3900 640 4080 640Q4240 638 4244 660');
m.l(3029, 1140, 3029, 1604); m.l(3499, 1130, 3499, 1178); m.l(3965, 1130, 3966, 1144);

// preset cycling
m.n('obj s22', 3668, 1636, 132, 42, 'counter 1 5', 'puuuu', 'yuuu');
m.n('obj', 3896, 1636, 112, 44, 'delay 50', 'pu', 'y');
m.n('num lightnum grey s22', 3668, 1698, 54, 42, '0', 'p', [[19, 'y'], [36, 'g']]);
m.n('obj', 3668, 1770, 570, 44, 'gate 5', 'cp', 'yyyyy');
m.l(3687, 1610, 3687, 1636); m.l(3687, 1678, 3687, 1698); m.l(3687, 1740, 3687, 1770);
m.d('M3687 1610Q3688 1629 3730 1629C3790 1628 3830 1618 3870 1618Q3914 1618 3915 1638');
m.d('M3915 1680Q3918 1706 3985 1712C4050 1719 4110 1721 4155 1731Q4218 1742 4219 1772');
m.p([[3630, 1891], [3687, 1891], [3687, 1909]], 0, 24);
[
  [3668, 124, 419, '1. 0.5|0.333333|0.252101|0.201681|0.168067|0.142857|0.12605|0.109244|0.10084|0.088235|0.084034|0.07563|0.071429|0.063025|0.054622'],
  [3802, 110, 419, '1. 0.|0.33507|9 0.|0.20418|8 0.|0.10471|2 0.|0.04712|0.|0.03141|4 0.|0.02617|8 0.|0.01570|7 0.'],
  [3934, 110, 311, '1. 0. 0.|0.46596|9 0. 0.|0.24607|3 0. 0.|0.08900|5 0. 0.|0.04712|0. 0.|0.01570|7'],
  [4068, 124, 445, '1.|0.287958|0.183246|0.099476|0.052356|0.031414|0.34555|0.141361|0.094241|0.04712|0.026178|0.015707|0.010471|0.078534|0.015707|0.005236'],
  [4200, 124, 445, '0.413613|0.230366|0.727749|0.319372|0.387435|0.109948|0.167539|0.08377|0.361257|0.109948|0.193717|0.057592|0.099476|0.041885|0.015707|0.010471'],
].forEach(([x, w, h, t], i) => {
  const X = x + 19;
  m.n('bang', x, 1834, 48, 48, '', 'p', 'y');
  m.n('msg', x, 1907, w, h, t.replace(/\|/g, '\n'), 'pu', 'y');
  m.n('obj', x, 2376, 120, 44, 's preset' + (i + 1), 'p');
  m.l(3687 + i * 133, 1814, X, 1834); m.l(X, 1882, X, 1907); m.l(X, 1907 + h, X, 2376);
});

// bottom edge
m.raw('haze', 1888, 2796, 66, 8); m.raw('haze', 2971, 2790, 168, 14);
[3002, 3032, 3062, 3092, 3122].forEach(x => m.raw('flat', x, 2790, 14, 14));
m.extra('<path d="M1906 2804Q1918 2798 1932 2804Z" fill="#a22"/>');
m.done();

// ---------- Pitch_Visual ----------
const s = new Patch('pitch', 100, 1713, 3478, 1010);
s.n('plain', 132, 2258, 240, 30, 'Note on border colour');
s.n('plain', 163, 2369, 220, 30, 'Initial border colour');
s.n('io inlet', 1236, 1760, 60, 60, '1');
s.n('io inlet', 1306, 1760, 60, 60, '2');
const cols = [[422, 184, 152], [696, 184, 146], [954, 184, 152], [1236, 184, 146], [1494, 184, 152], [1754, 184, 152], [2010, 200, 146],
  [2268, 200, 146], [2528, 200, 146], [2802, 200, 146], [3078, 200, 168], [3328, 200, 146]];
cols.forEach(([x, w, mw], i) => {
  const n = i + 1, A = x + 19, last = n === 12, B = x + (last ? 59 : 85), sy = last ? 2206 : 2180;
  s.n('obj', x, 2000, w, 98, n < 7 ? `if ($i1 == ${n}) &&\n($i2 == 1) then\n1 else 0` : `if ($i1 == ${n}) &&\n($i2 == 1) then 1\nelse 0`, 'pc', 'y');
  s.n('obj', x, 2136, last ? 78 : 104, sy - 2136, last ? 'selec\nt 1' : 'select 1', 'pu', 'yy');
  s.n('msg', x, 2226, mw, 98, 'bordercolor\n0.32 0.65\n0.98 1.');
  s.n('msg', B - 19, 2334, 146, 98, [2, 4, 7, 9, 11].includes(n) ? 'bordercolor\n0.24 0.25\n0.28 1.' : 'bordercolor\n0.65 0.67\n0.66 1.');
  s.n('io', x, 2554, 60, 60, n);
  s.p([[1323, 1820], [1323, 1974], [x + w - 19, 1974], [x + w - 19, 2002]]);
  if (n === 4) s.l(1255, 1820, 1255, 2002);
  else s.p([[1255, 1820], [1255, 1974], [A, 1974], [A, 2002]]);
  s.l(A, 2098, A, 2136); s.l(A, sy, A - 1, 2226); s.l(B, sy, B, 2226);
  s.l(B, 2324, B, 2334); s.l(A, 2324, A, 2552);
  s.c(B, 2432, A, 2552, 58, 58);
});
s.done();
```
